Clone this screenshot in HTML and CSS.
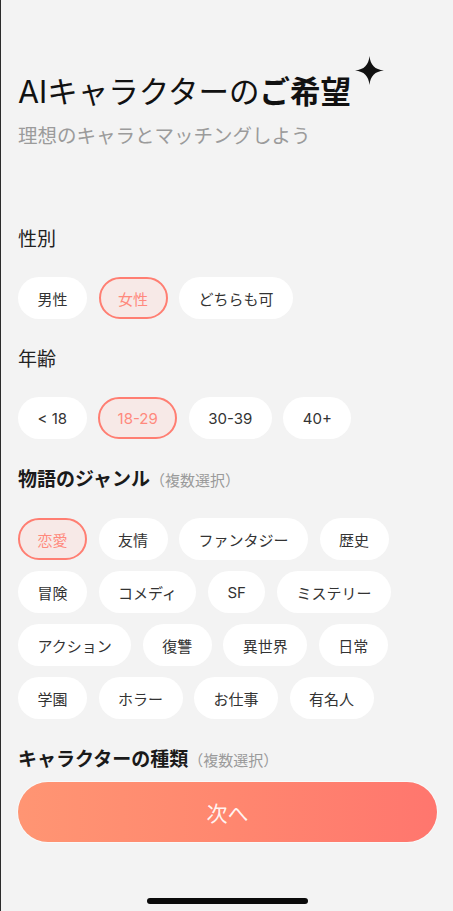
FILE: index.html
```html
<!DOCTYPE html>
<html lang="ja">
<head>
<meta charset="utf-8">
<title>AIキャラクターのご希望</title>
<link rel="stylesheet" href="styles.css">
</head>
<body>
<div class="screen">
  <main class="content">
    <header class="hero">
      <h1 class="title">AIキャラクターの<b>ご希望</b><svg class="sparkle" viewBox="0 0 30 30" aria-hidden="true"><path d="M15 0 C16 9.5 20.5 14 30 15 C20.5 16 16 20.5 15 30 C14 20.5 9.5 16 0 15 C9.5 14 14 9.5 15 0 Z" fill="#111"/></svg></h1>
      <p class="subtitle">理想のキャラとマッチングしよう</p>
    </header>

    <section class="group group-first">
      <h2 class="label">性別</h2>
      <div class="chips">
        <span class="chip">男性</span>
        <span class="chip is-selected">女性</span>
        <span class="chip">どちらも可</span>
      </div>
    </section>

    <section class="group">
      <h2 class="label">年齢</h2>
      <div class="chips">
        <span class="chip">&lt; 18</span>
        <span class="chip is-selected">18-29</span>
        <span class="chip">30-39</span>
        <span class="chip">40+</span>
      </div>
    </section>

    <section class="group">
      <h2 class="label label-strong">物語のジャンル<span class="note">（複数選択）</span></h2>
      <div class="chips">
        <span class="chip is-selected">恋愛</span>
        <span class="chip">友情</span>
        <span class="chip">ファンタジー</span>
        <span class="chip">歴史</span>
        <span class="chip">冒険</span>
        <span class="chip">コメディ</span>
        <span class="chip">SF</span>
        <span class="chip">ミステリー</span>
        <span class="chip">アクション</span>
        <span class="chip">復讐</span>
        <span class="chip">異世界</span>
        <span class="chip">日常</span>
        <span class="chip">学園</span>
        <span class="chip">ホラー</span>
        <span class="chip">お仕事</span>
        <span class="chip">有名人</span>
      </div>
    </section>

    <section class="group">
      <h2 class="label label-strong">キャラクターの種類<span class="note">（複数選択）</span></h2>
    </section>
  </main>

  <footer class="footer">
    <button class="next-btn" type="button">次へ</button>
    <div class="home-indicator"></div>
  </footer>
</div>
</body>
</html>
```

FILE: styles.css
```css
* { box-sizing: border-box; }

html, body {
  margin: 0;
  padding: 0;
}

body {
  width: 453px;
  height: 911px;
  background: #f3f3f3;
  font-family: Inter, "Noto Sans CJK JP", sans-serif;
  color: #222;
  border-left: 1px solid #2b2b2b;
  overflow: hidden;
}

.screen {
  height: 911px;
  display: flex;
  flex-direction: column;
}

.content {
  flex: 1;
  overflow: hidden;
  padding: 0 16px 0 17px;
}

.hero {
  padding-top: 72px;
}

.title {
  position: relative;
  display: inline-block;
  margin: 0;
  font-size: 30.5px;
  line-height: 40px;
  font-weight: 400;
  color: #111;
  letter-spacing: 0;
}

.title b {
  font-weight: 700;
}

.sparkle {
  position: absolute;
  left: calc(100% + 4px);
  top: -16px;
  width: 29px;
  height: 29px;
}

.subtitle {
  margin: 10px 0 0;
  font-size: 19.5px;
  line-height: 28px;
  color: #9b9b9b;
}

.group {
  margin-top: 27px;
}

.group-first {
  margin-top: 76px;
}

.label {
  margin: 0 0 23px;
  font-size: 19px;
  line-height: 28px;
  font-weight: 400;
  color: #222;
}

.label-strong {
  font-weight: 700;
  color: #1a1a1a;
}

.note {
  font-size: 15px;
  font-weight: 400;
  color: #9a9a9a;
}

.chips {
  display: flex;
  flex-wrap: wrap;
  gap: 11px 11.5px;
}

.chip {
  display: inline-flex;
  align-items: center;
  justify-content: center;
  height: 42px;
  padding: 0 19.5px;
  border-radius: 21px;
  background: #ffffff;
  font-size: 15px;
  color: #333;
  white-space: nowrap;
}

.chip.is-selected {
  background: #f7e9e7;
  border: 2px solid #ff7e72;
  color: #ff897d;
  padding: 0 17.5px;
}

.footer {
  flex: none;
  padding: 0 16px 7px 17px;
  display: flex;
  flex-direction: column;
  align-items: center;
}

.next-btn {
  width: 100%;
  height: 60px;
  border: none;
  border-radius: 30px;
  background: linear-gradient(90deg, #ff9573 0%, #ff876f 50%, #ff766e 100%);
  color: rgba(255, 255, 255, 0.92);
  font-family: Inter, "Noto Sans CJK JP", sans-serif;
  font-size: 21px;
  font-weight: 400;
  box-shadow: 0 0 0 1px rgba(255, 255, 255, 0.5);
}

.home-indicator {
  margin-top: 56px;
  width: 161px;
  height: 6px;
  border-radius: 3px;
  background: #0a0a0a;
}
```
